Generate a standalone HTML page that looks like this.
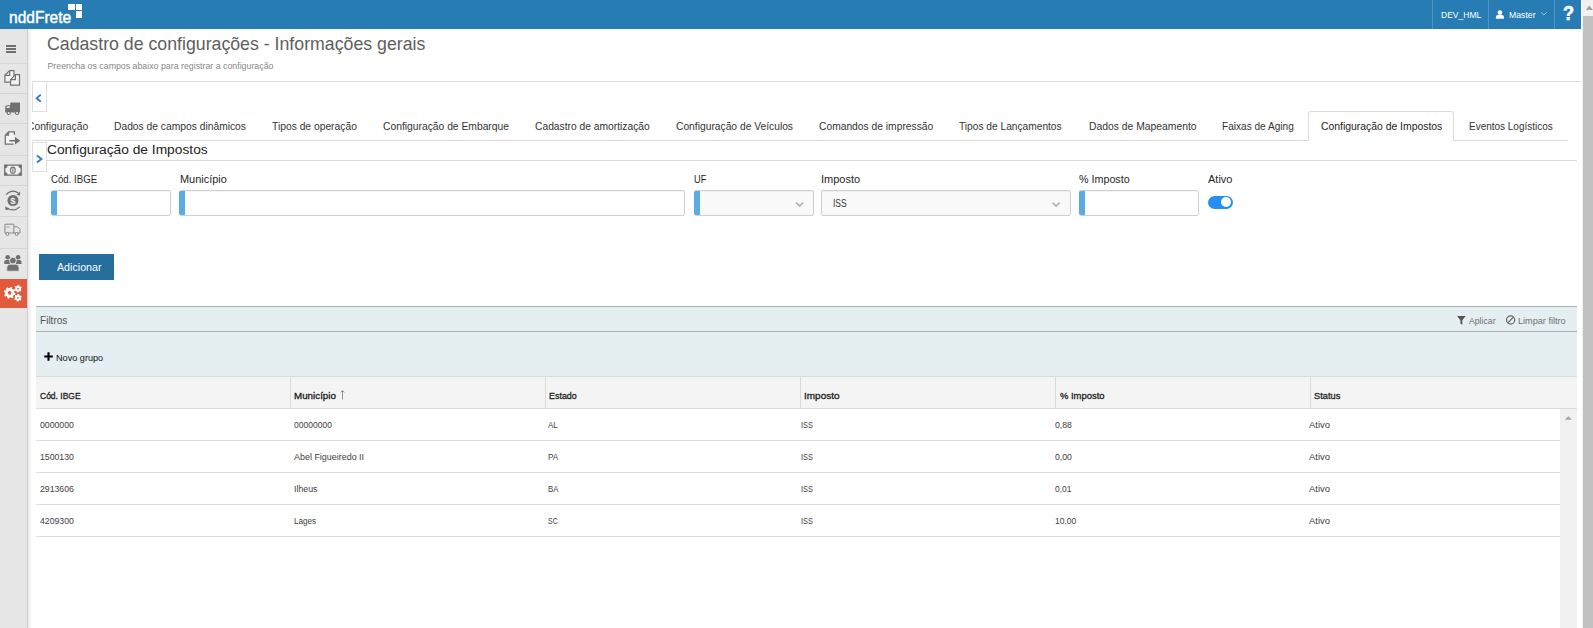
<!DOCTYPE html>
<html><head><meta charset="utf-8"><style>
html,body{margin:0;padding:0;}
body{width:1593px;height:628px;position:relative;overflow:hidden;background:#fff;font-family:"Liberation Sans",sans-serif;}
.t{position:absolute;white-space:nowrap;transform-origin:0 0;}
</style></head><body>
<div style="position:absolute;left:0;top:0;width:1581px;height:29px;background:#277db3"></div>
<div style="position:absolute;left:1432px;top:0;width:1px;height:29px;background:#4f95c4"></div>
<div style="position:absolute;left:1488px;top:0;width:1px;height:29px;background:#4f95c4"></div>
<div style="position:absolute;left:1554px;top:0;width:1px;height:29px;background:#4f95c4"></div>
<div class="t" style="left:9.20px;top:7.60px;font-size:16.76px;line-height:19px;color:#fff;transform:scaleX(0.9281);-webkit-text-stroke:0.45px #fff;">nddFrete</div>
<div style="position:absolute;left:68.4px;top:3.8px;width:6.7px;height:6.5px;background:#fff"></div>
<div style="position:absolute;left:75.5px;top:3.8px;width:6.4px;height:6.5px;background:#fff"></div>
<div style="position:absolute;left:75.5px;top:10.9px;width:6.4px;height:6.8px;background:#fff"></div>
<div class="t" style="left:1440.60px;top:8.80px;font-size:9.50px;line-height:11px;color:#fff;transform:scaleX(0.8958);">DEV_HML</div>
<div class="t" style="left:1509.20px;top:9.90px;font-size:9.22px;line-height:10px;color:#fff;transform:scaleX(0.9446);">Master</div>
<svg style="position:absolute;left:0;top:0" width="1593" height="29"><circle cx="1499.9" cy="12.5" r="2.3" fill="#fff"/><path d="M1495.9 18.8 V17.2 Q1495.9 14.5 1499.9 14.5 Q1503.9 14.5 1503.9 17.2 V18.8 Z" fill="#fff"/><path d="M1541.2 12.4 L1543.9 15 L1546.6 12.4" fill="none" stroke="#b8d4ea" stroke-width="0.8"/></svg>
<div class="t" style="left:1563.00px;top:2.00px;font-size:20.11px;line-height:22px;color:#fff;font-weight:bold;transform:scaleX(0.8966);-webkit-text-stroke:0.6px #fff;">?</div>
<div style="position:absolute;left:1582px;top:0;width:11px;height:628px;background:#f1f1f1"></div>
<div style="position:absolute;left:1583px;top:16px;width:10px;height:612px;background:#c1c1c1"></div>
<svg style="position:absolute;left:1580px;top:0" width="13" height="16"><path d="M5.6 9.9 L9.3 5.6 L13 9.9 Z" fill="#a3a3a3"/></svg>
<div style="position:absolute;left:0;top:29px;width:27px;height:599px;background:#e6e6e6"></div><div style="position:absolute;left:0;top:29px;width:1581px;height:1px;background:rgba(120,80,60,0.06)"></div>
<div style="position:absolute;left:27px;top:29px;width:1px;height:599px;background:#cfcfcf"></div>
<div style="position:absolute;left:28px;top:29px;width:4px;height:599px;background:linear-gradient(to right,#ececec,#fff)"></div>
<div style="position:absolute;left:0;top:63px;width:27px;height:1px;background:#d6d6d6"></div>
<div style="position:absolute;left:0;top:93px;width:27px;height:1px;background:#d6d6d6"></div>
<div style="position:absolute;left:0;top:123px;width:27px;height:1px;background:#d6d6d6"></div>
<div style="position:absolute;left:0;top:155px;width:27px;height:1px;background:#d6d6d6"></div>
<div style="position:absolute;left:0;top:185px;width:27px;height:1px;background:#d6d6d6"></div>
<div style="position:absolute;left:0;top:216px;width:27px;height:1px;background:#d6d6d6"></div>
<div style="position:absolute;left:0;top:248px;width:27px;height:1px;background:#d6d6d6"></div>
<div style="position:absolute;left:0;top:279px;width:27px;height:29px;background:#e05a3b"></div>
<div class="t" style="left:46.90px;top:33.00px;font-size:18.44px;line-height:21px;color:#5e5e5e;transform:scaleX(0.9613);">Cadastro de configurações - Informações gerais</div>
<div class="t" style="left:47.50px;top:60.80px;font-size:8.80px;line-height:10px;color:#888;">Preencha os campos abaixo para registrar a configuração</div>
<div style="position:absolute;left:32px;top:81px;width:1549px;height:1px;background:#dcdcdc"></div>
<div style="position:absolute;left:32px;top:82px;width:13px;height:29px;border:1px solid #dedede;border-top:none"></div>
<svg style="position:absolute;left:32px;top:90px" width="14" height="16"><path d="M8.8 4.6 L4.6 8.2 L8.8 11.8" fill="none" stroke="#2f80c4" stroke-width="1.9"/></svg>
<div style="position:absolute;left:32px;top:111px;width:1536px;height:30px;overflow:hidden">
</div>
<div style="position:absolute;left:32px;top:140px;width:1536px;height:1px;background:#dcdcdc"></div>
<div style="position:absolute;left:1308px;top:111px;width:144px;height:29px;border:1px solid #dcdcdc;border-bottom:none;border-radius:3px 3px 0 0;background:#fff"></div>
<div style="position:absolute;left:32px;top:111px;width:1536px;height:29px;overflow:hidden">
<div class="t" style="left:-5.15px;top:8.70px;font-size:10.89px;line-height:12px;color:#333;transform:scaleX(0.9450);">Configuração</div>
<div class="t" style="left:82.00px;top:8.70px;font-size:10.89px;line-height:12px;color:#333;transform:scaleX(0.9451);">Dados de campos dinâmicos</div>
<div class="t" style="left:240.00px;top:8.70px;font-size:10.89px;line-height:12px;color:#333;transform:scaleX(0.9463);">Tipos de operação</div>
<div class="t" style="left:351.00px;top:8.70px;font-size:10.89px;line-height:12px;color:#333;transform:scaleX(0.9472);">Configuração de Embarque</div>
<div class="t" style="left:503.00px;top:8.70px;font-size:10.89px;line-height:12px;color:#333;transform:scaleX(0.9446);">Cadastro de amortização</div>
<div class="t" style="left:643.90px;top:8.70px;font-size:10.89px;line-height:12px;color:#333;transform:scaleX(0.9441);">Configuração de Veículos</div>
<div class="t" style="left:787.10px;top:8.70px;font-size:10.89px;line-height:12px;color:#333;transform:scaleX(0.9448);">Comandos de impressão</div>
<div class="t" style="left:927.40px;top:8.70px;font-size:10.89px;line-height:12px;color:#333;transform:scaleX(0.9362);">Tipos de Lançamentos</div>
<div class="t" style="left:1056.60px;top:8.70px;font-size:10.89px;line-height:12px;color:#333;transform:scaleX(0.9511);">Dados de Mapeamento</div>
<div class="t" style="left:1190.30px;top:8.70px;font-size:10.89px;line-height:12px;color:#333;transform:scaleX(0.9276);">Faixas de Aging</div>
<div class="t" style="left:1288.80px;top:8.70px;font-size:10.89px;line-height:12px;color:#222;transform:scaleX(0.9553);">Configuração de Impostos</div>
<div class="t" style="left:1436.50px;top:8.70px;font-size:10.89px;line-height:12px;color:#333;transform:scaleX(0.9174);">Eventos Logísticos</div>
</div>
<div style="position:absolute;left:32px;top:142px;width:13px;height:28px;border:1px solid #dedede"></div>
<svg style="position:absolute;left:32px;top:151px" width="14" height="16"><path d="M4.9 4.6 L9.4 8 L4.9 11.4" fill="none" stroke="#2f80c4" stroke-width="1.9"/></svg>
<div class="t" style="left:47.30px;top:142.30px;font-size:13.69px;line-height:15px;color:#222;transform:scaleX(1.0056);">Configuração de Impostos</div>
<div style="position:absolute;left:46px;top:160px;width:1531px;height:1px;background:#dcdcdc"></div>
<div class="t" style="left:50.90px;top:172.80px;font-size:10.61px;line-height:12px;color:#262626;transform:scaleX(0.9086);">Cód. IBGE</div>
<div class="t" style="left:179.60px;top:172.80px;font-size:10.61px;line-height:12px;color:#262626;transform:scaleX(1.0324);">Município</div>
<div class="t" style="left:693.70px;top:172.80px;font-size:10.61px;line-height:12px;color:#262626;transform:scaleX(0.8680);">UF</div>
<div class="t" style="left:821.30px;top:172.80px;font-size:10.61px;line-height:12px;color:#262626;transform:scaleX(1.0388);">Imposto</div>
<div class="t" style="left:1078.80px;top:172.80px;font-size:10.61px;line-height:12px;color:#262626;transform:scaleX(1.0109);">% Imposto</div>
<div class="t" style="left:1207.50px;top:172.80px;font-size:10.61px;line-height:12px;color:#262626;transform:scaleX(1.0374);">Ativo</div>
<div style="position:absolute;left:51px;top:190px;width:120px;height:26px;box-sizing:border-box;border:1px solid #cfcfcf;border-radius:2px;background:#fff;box-shadow:inset 0 1px 1px rgba(0,0,0,0.04)"></div>
<div style="position:absolute;left:51px;top:191px;width:6px;height:24px;background:#5aade3;border-radius:2px 0 0 2px"></div>
<div style="position:absolute;left:179px;top:190px;width:506px;height:26px;box-sizing:border-box;border:1px solid #cfcfcf;border-radius:2px;background:#fff;box-shadow:inset 0 1px 1px rgba(0,0,0,0.04)"></div>
<div style="position:absolute;left:179px;top:191px;width:6px;height:24px;background:#5aade3;border-radius:2px 0 0 2px"></div>
<div style="position:absolute;left:694px;top:190px;width:120px;height:26px;box-sizing:border-box;border:1px solid #cfcfcf;border-radius:2px;background:#f9f9f9;box-shadow:inset 0 1px 1px rgba(0,0,0,0.04)"></div>
<div style="position:absolute;left:694px;top:191px;width:5.5px;height:24px;background:#5aade3;border-radius:2px 0 0 2px"></div>
<div style="position:absolute;left:821px;top:190px;width:250px;height:26px;box-sizing:border-box;border:1px solid #cfcfcf;border-radius:2px;background:#f9f9f9;box-shadow:inset 0 1px 1px rgba(0,0,0,0.04)"></div>
<div style="position:absolute;left:1079px;top:190px;width:120px;height:26px;box-sizing:border-box;border:1px solid #cfcfcf;border-radius:2px;background:#fff;box-shadow:inset 0 1px 1px rgba(0,0,0,0.04)"></div>
<div style="position:absolute;left:1079px;top:191px;width:5.5px;height:24px;background:#5aade3;border-radius:2px 0 0 2px"></div>
<svg style="position:absolute;left:0;top:195px" width="1593" height="20"><path d="M796 7.6 L799.6 11 L803.2 7.6" fill="none" stroke="#b8b8b8" stroke-width="1.9"/><path d="M1052.5 7.6 L1056.1 11 L1059.7 7.6" fill="none" stroke="#b8b8b8" stroke-width="1.9"/></svg>
<div class="t" style="left:832.90px;top:196.90px;font-size:11.03px;line-height:12px;color:#333;transform:scaleX(0.7656);">ISS</div>
<div style="position:absolute;left:1207.5px;top:195.6px;width:25.5px;height:13.4px;border-radius:7px;background:#2590f0"></div>
<div style="position:absolute;left:1221.2px;top:197.3px;width:10px;height:10px;border-radius:50%;background:#fff"></div>
<div style="position:absolute;left:39px;top:254px;width:75px;height:26px;background:#246d9d"></div>
<div class="t" style="left:57.00px;top:260.80px;font-size:11.03px;line-height:12px;color:#fff;transform:scaleX(0.9694);">Adicionar</div>
<div style="position:absolute;left:36px;top:306px;width:1541px;height:70px;background:#e5eff2"></div>
<div style="position:absolute;left:36px;top:306px;width:1541px;height:1px;background:#a9b1b4"></div>
<div style="position:absolute;left:36px;top:331px;width:1541px;height:1px;background:#a9b1b4"></div>
<div class="t" style="left:39.90px;top:313.90px;font-size:11.03px;line-height:12px;color:#555;transform:scaleX(0.9130);">Filtros</div>
<div class="t" style="left:1468.80px;top:315.50px;font-size:9.08px;line-height:10px;color:#707070;transform:scaleX(0.9555);">Aplicar</div>
<div class="t" style="left:1518.20px;top:315.50px;font-size:9.08px;line-height:10px;color:#707070;transform:scaleX(1.0056);">Limpar filtro</div>
<svg style="position:absolute;left:1450px;top:310px" width="130" height="20"><path d="M7 6.1 H15.7 L12.3 10.2 V14.7 L10.4 13.4 V10.2 Z" fill="#555"/><circle cx="60.6" cy="10" r="4.1" fill="none" stroke="#666" stroke-width="1.2"/><path d="M57.8 12.8 L63.4 7.2" stroke="#666" stroke-width="1.2"/></svg>
<svg style="position:absolute;left:36px;top:345px" width="30" height="25"><path d="M12.5 7.3 V15.8 M8.3 11.5 H16.8" stroke="#000" stroke-width="2.1"/></svg>
<div class="t" style="left:56.40px;top:352.80px;font-size:9.08px;line-height:10px;color:#111;transform:scaleX(1.0057);">Novo grupo</div>
<div style="position:absolute;left:36px;top:376px;width:1541px;height:32px;background:#f4f4f4;border-top:1px solid #dcdcdc;box-sizing:border-box"></div>
<div style="position:absolute;left:36px;top:408px;width:1541px;height:1px;background:#dcdcdc"></div>
<div style="position:absolute;left:290px;top:377px;width:1px;height:31px;background:#dcdcdc"></div>
<div style="position:absolute;left:545px;top:377px;width:1px;height:31px;background:#dcdcdc"></div>
<div style="position:absolute;left:800px;top:377px;width:1px;height:31px;background:#dcdcdc"></div>
<div style="position:absolute;left:1055px;top:377px;width:1px;height:31px;background:#dcdcdc"></div>
<div style="position:absolute;left:1310px;top:377px;width:1px;height:31px;background:#dcdcdc"></div>
<div class="t" style="left:39.90px;top:389.80px;font-size:9.62px;line-height:11px;color:#222;transform:scaleX(0.8852);-webkit-text-stroke:0.3px #222;">Cód. IBGE</div>
<div class="t" style="left:294.30px;top:389.80px;font-size:9.62px;line-height:11px;color:#222;transform:scaleX(1.0202);-webkit-text-stroke:0.3px #222;">Município</div>
<div class="t" style="left:549.20px;top:389.80px;font-size:9.62px;line-height:11px;color:#222;transform:scaleX(0.9278);-webkit-text-stroke:0.3px #222;">Estado</div>
<div class="t" style="left:804.00px;top:389.80px;font-size:9.62px;line-height:11px;color:#222;transform:scaleX(1.0411);-webkit-text-stroke:0.3px #222;">Imposto</div>
<div class="t" style="left:1059.60px;top:389.80px;font-size:9.62px;line-height:11px;color:#222;transform:scaleX(0.9813);-webkit-text-stroke:0.3px #222;">% Imposto</div>
<div class="t" style="left:1313.80px;top:389.80px;font-size:9.62px;line-height:11px;color:#222;transform:scaleX(0.9645);-webkit-text-stroke:0.3px #222;">Status</div>
<svg style="position:absolute;left:336px;top:388px" width="12" height="14"><path d="M6.5 2.6 V11.5 M4.8 4.4 L6.5 2.6 L8.2 4.4" fill="none" stroke="#8a8a8a" stroke-width="0.9"/></svg>
<div class="t" style="left:39.50px;top:419.40px;font-size:9.72px;line-height:11px;color:#404040;transform:scaleX(0.8956);">0000000</div>
<div class="t" style="left:293.60px;top:419.40px;font-size:9.72px;line-height:11px;color:#404040;transform:scaleX(0.8764);">00000000</div>
<div class="t" style="left:547.70px;top:419.40px;font-size:9.72px;line-height:11px;color:#404040;transform:scaleX(0.8148);">AL</div>
<div class="t" style="left:801.20px;top:419.40px;font-size:9.72px;line-height:11px;color:#404040;transform:scaleX(0.7606);">ISS</div>
<div class="t" style="left:1055.40px;top:419.40px;font-size:9.72px;line-height:11px;color:#404040;transform:scaleX(0.8941);">0,88</div>
<div class="t" style="left:1309.30px;top:419.40px;font-size:9.72px;line-height:11px;color:#404040;transform:scaleX(0.9666);">Ativo</div>
<div style="position:absolute;left:36px;top:440px;width:1524px;height:1px;background:#dcdcdc"></div>
<div class="t" style="left:39.50px;top:451.40px;font-size:9.72px;line-height:11px;color:#404040;transform:scaleX(0.8956);">1500130</div>
<div class="t" style="left:293.60px;top:451.40px;font-size:9.72px;line-height:11px;color:#404040;transform:scaleX(0.9201);">Abel Figueiredo II</div>
<div class="t" style="left:547.70px;top:451.40px;font-size:9.72px;line-height:11px;color:#404040;transform:scaleX(0.8379);">PA</div>
<div class="t" style="left:801.20px;top:451.40px;font-size:9.72px;line-height:11px;color:#404040;transform:scaleX(0.7606);">ISS</div>
<div class="t" style="left:1055.40px;top:451.40px;font-size:9.72px;line-height:11px;color:#404040;transform:scaleX(0.8941);">0,00</div>
<div class="t" style="left:1309.30px;top:451.40px;font-size:9.72px;line-height:11px;color:#404040;transform:scaleX(0.9666);">Ativo</div>
<div style="position:absolute;left:36px;top:472px;width:1524px;height:1px;background:#dcdcdc"></div>
<div class="t" style="left:39.50px;top:483.40px;font-size:9.72px;line-height:11px;color:#404040;transform:scaleX(0.8956);">2913606</div>
<div class="t" style="left:293.60px;top:483.40px;font-size:9.72px;line-height:11px;color:#404040;transform:scaleX(0.9018);">Ilheus</div>
<div class="t" style="left:547.70px;top:483.40px;font-size:9.72px;line-height:11px;color:#404040;transform:scaleX(0.8016);">BA</div>
<div class="t" style="left:801.20px;top:483.40px;font-size:9.72px;line-height:11px;color:#404040;transform:scaleX(0.7606);">ISS</div>
<div class="t" style="left:1055.40px;top:483.40px;font-size:9.72px;line-height:11px;color:#404040;transform:scaleX(0.8677);">0,01</div>
<div class="t" style="left:1309.30px;top:483.40px;font-size:9.72px;line-height:11px;color:#404040;transform:scaleX(0.9666);">Ativo</div>
<div style="position:absolute;left:36px;top:504px;width:1524px;height:1px;background:#dcdcdc"></div>
<div class="t" style="left:39.50px;top:515.40px;font-size:9.72px;line-height:11px;color:#404040;transform:scaleX(0.8956);">4209300</div>
<div class="t" style="left:293.60px;top:515.40px;font-size:9.72px;line-height:11px;color:#404040;transform:scaleX(0.8383);">Lages</div>
<div class="t" style="left:547.70px;top:515.40px;font-size:9.72px;line-height:11px;color:#404040;transform:scaleX(0.7181);">SC</div>
<div class="t" style="left:801.20px;top:515.40px;font-size:9.72px;line-height:11px;color:#404040;transform:scaleX(0.7606);">ISS</div>
<div class="t" style="left:1055.40px;top:515.40px;font-size:9.72px;line-height:11px;color:#404040;transform:scaleX(0.8750);">10,00</div>
<div class="t" style="left:1309.30px;top:515.40px;font-size:9.72px;line-height:11px;color:#404040;transform:scaleX(0.9666);">Ativo</div>
<div style="position:absolute;left:36px;top:536px;width:1524px;height:1px;background:#dcdcdc"></div>
<div style="position:absolute;left:1560px;top:409px;width:17px;height:219px;background:#f1f1f1"></div>
<svg style="position:absolute;left:1560px;top:409px" width="17" height="17"><path d="M4.9 10.8 L8.4 7.3 L11.9 10.8 Z" fill="#a3a3a3"/></svg>
<svg style="position:absolute;left:0;top:0" width="28" height="320"><rect x="6" y="45" width="10" height="2" fill="#707070"/><rect x="6" y="48" width="10" height="2" fill="#707070"/><rect x="6" y="51" width="10" height="2" fill="#707070"/><path d="M4.9 75.3 L9.7 70.6 H14 V82.2 H4.9 Z" fill="#f4f4f4" stroke="#707070" stroke-width="1.2" stroke-linejoin="round"/><path d="M4.9 75.3 H9.7 V70.6" fill="none" stroke="#707070" stroke-width="1.2"/><path d="M10.6 79.7 L15.4 74.6 H19.5 V85.2 H10.6 Z" fill="#f4f4f4" stroke="#707070" stroke-width="1.2" stroke-linejoin="round"/><path d="M10.6 79.7 H15.4 V74.6" fill="none" stroke="#707070" stroke-width="1.2"/><path d="M5.2 112.4 V107.6 Q5.2 105.3 7.4 105.3 H10.3 V102.6 H20 V112.4 Z" fill="#707070"/><path d="M6.3 108.1 Q6.5 106.3 8 106.3 H9.7 V108.1 Z" fill="#eee"/><circle cx="8.7" cy="113" r="2.1" fill="#707070"/><circle cx="8.7" cy="113" r="1" fill="#eee"/><circle cx="17" cy="113" r="2.1" fill="#707070"/><circle cx="17" cy="113" r="1" fill="#eee"/><path d="M5.3 135.2 L8.6 131.9 H14.4 V144 H5.3 Z" fill="#f3f3f3"/><path d="M14.4 134.8 V131.9 H8.6 L5.3 135.2 V144 H13.6" fill="none" stroke="#707070" stroke-width="1.25"/><path d="M4.8 135.7 L9.1 131.4 V135.7 Z" fill="#707070"/><path d="M9.4 140.7 H15.5" stroke="#707070" stroke-width="1.6"/><path d="M15 136.9 L20.3 140.7 L15 144.5 Z" fill="#707070"/><rect x="4.1" y="164.5" width="17.8" height="11.3" fill="#707070"/><path d="M7.6 165.8 H18.4 Q18.4 167.8 20.6 168.3 V172 Q18.4 172.5 18.4 174.5 H7.6 Q7.6 172.5 5.4 172 V168.3 Q7.6 167.8 7.6 165.8 Z" fill="#f0f0f0"/><ellipse cx="12.85" cy="170.2" rx="2.4" ry="3.1" fill="none" stroke="#707070" stroke-width="1.1"/><path d="M12.9 168.2 V172.3" stroke="#707070" stroke-width="1"/><circle cx="13" cy="200.5" r="5.5" fill="#707070"/><text x="13" y="204.2" font-family="Liberation Sans" font-weight="bold" font-size="9.5" fill="#eee" text-anchor="middle">$</text><path d="M6.2 194.6 Q12 188.6 18.6 193.2" fill="none" stroke="#707070" stroke-width="1.2"/><path d="M20.2 191.6 L20 195.6 L16.5 195 Z" fill="#707070"/><path d="M19.8 206.9 Q14 212.4 6.8 207.9" fill="none" stroke="#707070" stroke-width="1.2"/><path d="M5.2 206.3 L5.6 210.3 L9.2 209.2 Z" fill="#707070"/><path d="M4.9 233 V224.2 H13.8 V233 Z" fill="none" stroke="#8a8a8a" stroke-width="1"/><path d="M13.8 226.8 H17.6 L20 229.4 V233 H13.8" fill="none" stroke="#8a8a8a" stroke-width="1"/><circle cx="7.4" cy="234" r="1.5" fill="#e6e6e6" stroke="#8a8a8a" stroke-width="1"/><circle cx="16.7" cy="234" r="1.5" fill="#e6e6e6" stroke="#8a8a8a" stroke-width="1"/><path d="M6 227 H10" stroke="#9a9a9a" stroke-width="0.8"/><circle cx="7.7" cy="257.2" r="2.3" fill="#707070"/><circle cx="18.1" cy="257.2" r="2.3" fill="#707070"/><path d="M4.2 264 V261.8 Q4.2 259.9 6.1 259.9 H10 V264 Z" fill="#707070"/><path d="M21.5 264 V261.8 Q21.5 259.9 19.6 259.9 H15.8 V264 Z" fill="#707070"/><circle cx="12.9" cy="260.6" r="3.4" fill="#707070" stroke="#e6e6e6" stroke-width="0.9"/><path d="M6.8 271.2 V267.4 Q6.8 264.2 10 264.2 H15.8 Q19 264.2 19 267.4 V271.2 Z" fill="#707070" stroke="#e6e6e6" stroke-width="0.8"/></svg>
<svg style="position:absolute;left:0;top:0" width="28" height="320"><path d="M14.40 292.80 L15.56 293.49 L15.15 295.06 L13.80 295.10 L13.02 296.12 L13.35 297.43 L11.96 298.25 L10.98 297.32 L9.70 297.50 L9.01 298.66 L7.44 298.25 L7.40 296.90 L6.38 296.12 L5.07 296.45 L4.25 295.06 L5.18 294.08 L5.00 292.80 L3.84 292.11 L4.25 290.54 L5.60 290.50 L6.38 289.48 L6.05 288.17 L7.44 287.35 L8.42 288.28 L9.70 288.10 L10.39 286.94 L11.96 287.35 L12.00 288.70 L13.02 289.48 L14.33 289.15 L15.15 290.54 L14.22 291.52 Z M11.6 292.8 A1.9 1.9 0 1 0 7.799999999999999 292.8 A1.9 1.9 0 1 0 11.6 292.8 Z" fill="#fff" fill-rule="evenodd"/><path d="M20.87 289.59 L21.41 290.38 L20.58 291.49 L19.67 291.19 L18.67 291.63 L18.25 292.49 L16.88 292.33 L16.68 291.39 L15.80 290.74 L14.84 290.81 L14.29 289.54 L15.01 288.90 L15.13 287.81 L14.59 287.02 L15.42 285.91 L16.33 286.21 L17.33 285.77 L17.75 284.91 L19.12 285.07 L19.32 286.01 L20.20 286.66 L21.16 286.59 L21.71 287.86 L20.99 288.50 Z M18.9 288.7 A0.9 0.9 0 1 0 17.1 288.7 A0.9 0.9 0 1 0 18.9 288.7 Z" fill="#fff" fill-rule="evenodd"/><path d="M20.87 298.69 L21.41 299.48 L20.58 300.59 L19.67 300.29 L18.67 300.73 L18.25 301.59 L16.88 301.43 L16.68 300.49 L15.80 299.84 L14.84 299.91 L14.29 298.64 L15.01 298.00 L15.13 296.91 L14.59 296.12 L15.42 295.01 L16.33 295.31 L17.33 294.87 L17.75 294.01 L19.12 294.17 L19.32 295.11 L20.20 295.76 L21.16 295.69 L21.71 296.96 L20.99 297.60 Z M18.9 297.8 A0.9 0.9 0 1 0 17.1 297.8 A0.9 0.9 0 1 0 18.9 297.8 Z" fill="#fff" fill-rule="evenodd"/></svg>
</body></html>
